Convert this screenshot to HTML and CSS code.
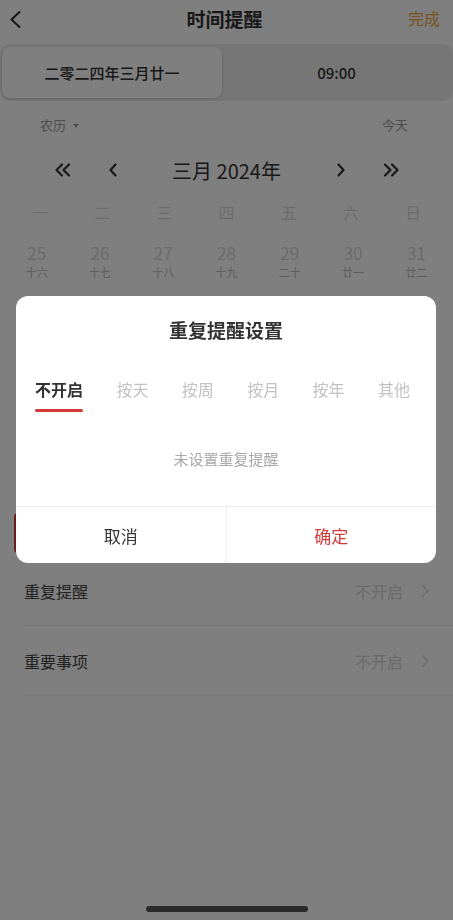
FILE: index.html
```html
<!DOCTYPE html>
<html lang="zh-CN">
<head>
<meta charset="UTF-8">
<meta name="viewport" content="width=device-width, initial-scale=1.0">
<title>时间提醒</title>
<link rel="stylesheet" href="styles.css">
</head>
<body>
<div class="screen">
  <header class="nav">
    <svg class="back" width="12" height="17" viewBox="0 0 12 17"><path d="M10.5 1 L2.5 8.5 L10.5 16" fill="none" stroke="#333" stroke-width="2" stroke-linecap="round" stroke-linejoin="round"/></svg>
    <h1>时间提醒</h1>
    <span class="done">完成</span>
  </header>

  <div class="segment">
    <div class="seg on">二零二四年三月廿一</div>
    <div class="seg">09:00</div>
  </div>

  <div class="cal-tools">
    <span>农历<i class="caret"></i></span>
    <span>今天</span>
  </div>

  <div class="month-nav">
    <span class="arrow outer-l"><svg width="18" height="14" viewBox="0 0 18 14"><path d="M8 1.5 L2.5 7 L8 12.5 M15 1.5 L9.5 7 L15 12.5" fill="none" stroke="#333" stroke-width="2.2" stroke-linecap="round" stroke-linejoin="round"/></svg></span>
    <span class="arrow"><svg width="10" height="14" viewBox="0 0 10 14"><path d="M7.5 1.5 L2.5 7 L7.5 12.5" fill="none" stroke="#333" stroke-width="2.2" stroke-linecap="round" stroke-linejoin="round"/></svg></span>
    <span class="month-title">三月 2024年</span>
    <span class="arrow"><svg width="10" height="14" viewBox="0 0 10 14"><path d="M2.5 1.5 L7.5 7 L2.5 12.5" fill="none" stroke="#333" stroke-width="2.2" stroke-linecap="round" stroke-linejoin="round"/></svg></span>
    <span class="arrow outer-r"><svg width="18" height="14" viewBox="0 0 18 14"><path d="M3 1.5 L8.5 7 L3 12.5 M10 1.5 L15.5 7 L10 12.5" fill="none" stroke="#333" stroke-width="2.2" stroke-linecap="round" stroke-linejoin="round"/></svg></span>
  </div>

  <div class="week">
    <span>一</span><span>二</span><span>三</span><span>四</span><span>五</span><span>六</span><span>日</span>
  </div>

  <!-- rows 2-6 sit under the dialog; only the picked day shows at its edge -->
  <div class="days">
    <div class="day muted"><b>25</b><small>十六</small></div>
    <div class="day muted"><b>26</b><small>十七</small></div>
    <div class="day muted"><b>27</b><small>十八</small></div>
    <div class="day muted"><b>28</b><small>十九</small></div>
    <div class="day muted"><b>29</b><small>二十</small></div>
    <div class="day muted"><b>30</b><small>廿一</small></div>
    <div class="day muted"><b>31</b><small>廿二</small></div>
    <div class="day sel"><b>29</b><small>廿一</small></div>
  </div>

  <div class="settings">
    <div class="row">
      <span>重复提醒</span>
      <span class="val">不开启<svg width="9" height="14" viewBox="0 0 9 14"><path d="M1.5 1.5 L7 7 L1.5 12.5" fill="none" stroke="currentColor" stroke-width="1.4" stroke-linecap="round" stroke-linejoin="round"/></svg></span>
    </div>
    <div class="row">
      <span>重要事项</span>
      <span class="val">不开启<svg width="9" height="14" viewBox="0 0 9 14"><path d="M1.5 1.5 L7 7 L1.5 12.5" fill="none" stroke="currentColor" stroke-width="1.4" stroke-linecap="round" stroke-linejoin="round"/></svg></span>
    </div>
  </div>

  <div class="home-bar"></div>
</div>

<!-- Repeat reminder dialog -->
<div class="mask"></div>
<div class="dialog">
  <h2>重复提醒设置</h2>
  <div class="tabs">
    <span class="tab on">不开启</span>
    <span class="tab">按天</span>
    <span class="tab">按周</span>
    <span class="tab">按月</span>
    <span class="tab">按年</span>
    <span class="tab">其他</span>
  </div>
  <p class="empty">未设置重复提醒</p>
  <div class="dialog-foot">
    <button>取消</button>
    <button class="ok">确定</button>
  </div>
</div>
</body>
</html>
```

FILE: styles.css
```css
* {
  box-sizing: border-box;
}
body {
  margin: 0;
  font-family: "Noto Sans CJK SC", "Noto Sans", sans-serif;
  color: #333;
  background: #fff;
}
.screen {
  width: 453px;
  min-height: 920px;
  display: flex;
  flex-direction: column;
}

/* Top bar */
.nav {
  height: 36px;
  display: grid;
  grid-template-columns: 1fr auto 1fr;
  align-items: center;
  padding: 0 13px 0 9px;
}
.nav .back {
  margin-top: 2px;
}
.nav h1 {
  margin: 0;
  font-size: 19px;
  font-weight: 700;
  color: #333;
}
.nav .done {
  justify-self: end;
  font-size: 16px;
  color: #f0a845;
}

/* Date / time switch */
.segment {
  margin-top: 8px;
  height: 57px;
  padding: 3px 2px;
  background: #ececec;
  border-radius: 10px;
  display: flex;
}
.seg {
  flex: 1;
  display: flex;
  align-items: center;
  justify-content: center;
  font-size: 15px;
  font-weight: 500;
  color: #333;
}
.seg.on {
  flex: 0 0 220px;
  background: #fff;
  border-radius: 8px;
  box-shadow: 0 1px 3px rgba(0,0,0,0.14);
}

/* Calendar */
.cal-tools {
  margin-top: 9px;
  height: 28px;
  display: flex;
  justify-content: space-between;
  align-items: center;
  padding: 0 45px 0 40px;
  font-size: 13px;
  color: #9a9a9a;
}
.caret {
  display: inline-block;
  border: 3.5px solid transparent;
  border-top: 4px solid #9a9a9a;
  border-bottom: 0;
  margin-left: 7px;
  vertical-align: middle;
}
.month-nav {
  margin-top: 12px;
  height: 40px;
  display: flex;
  justify-content: center;
  align-items: center;
}
.arrow {
  width: 30px;
  display: flex;
  justify-content: center;
}
.arrow svg {
  display: block;
}
.outer-l {
  margin-right: 20px;
}
.outer-r {
  margin-left: 20px;
}
.month-title {
  width: 198px;
  text-align: center;
  font-size: 20px;
  color: #333;
}
.week {
  margin-top: 7px;
  height: 30px;
  display: grid;
  grid-template-columns: repeat(7, 1fr);
  align-items: center;
  padding: 0 9px;
  text-align: center;
  font-size: 16px;
  color: #d9d9d9;
}
.days {
  margin-top: 16px;
  display: grid;
  grid-template-columns: repeat(7, 1fr);
  grid-auto-rows: 40px;
  row-gap: 14px;
  padding: 0 5px;
}
.day {
  margin: 0 9px;
  border-radius: 4px;
  display: flex;
  flex-direction: column;
  align-items: center;
  color: #333;
}
.day b {
  font-weight: 400;
  font-size: 17px;
  line-height: 20px;
}
.day small {
  font-size: 11px;
  line-height: 15px;
  margin-top: 2px;
  color: #777;
}
.day.muted b {
  color: #d6d6d6;
}
.day.muted small {
  color: #b8b8b8;
}
.day.sel {
  grid-row: 6;
  grid-column: 1;
  background: #d33b3b;
}
.day.sel b,
.day.sel small {
  color: #fff;
}

/* Settings list */
.settings {
  margin-top: 3px;
  padding-left: 24px;
}
.row {
  height: 70px;
  display: flex;
  align-items: center;
  justify-content: space-between;
  padding-right: 23px;
  border-bottom: 1px solid #f0f0f0;
  font-size: 16px;
  color: #444;
}
.row .val {
  display: flex;
  align-items: center;
  gap: 18px;
  color: #d4d4d4;
}
.home-bar {
  margin: auto auto 8px;
  width: 162px;
  height: 6px;
  border-radius: 3px;
  background: #555;
}

/* Dialog */
.mask {
  position: fixed;
  left: 0; top: 0;
  width: 100%; height: 100%;
  background: rgba(0,0,0,0.5);
}
.dialog {
  position: fixed;
  top: 296px;
  left: 16px;
  width: 420px;
  background: #fff;
  border-radius: 12px;
  overflow: hidden;
}
.dialog h2 {
  margin: 0;
  padding-top: 20px;
  line-height: 28px;
  text-align: center;
  font-size: 19px;
  font-weight: 700;
  color: #333;
}
.tabs {
  margin-top: 33px;
  display: flex;
  align-items: flex-start;
  justify-content: space-between;
  padding: 0 26px 0 19px;
}
.tab {
  font-size: 16px;
  line-height: 24px;
  color: #c2c2c2;
}
.tab.on {
  color: #333;
  font-weight: 700;
}
.tab.on::after {
  content: "";
  display: block;
  height: 3px;
  margin-top: 8px;
  border-radius: 2px;
  background: #d33b3b;
}
.empty {
  margin: 36px 0 0;
  line-height: 22px;
  text-align: center;
  font-size: 15px;
  color: #a8a8a8;
}
.dialog-foot {
  margin-top: 36px;
  height: 57px;
  display: flex;
  border-top: 1px solid #efefef;
}
.dialog-foot button {
  flex: 1;
  border: none;
  background: none;
  font-family: inherit;
  font-size: 17px;
  color: #333;
}
.dialog-foot button + button {
  border-left: 1px solid #efefef;
}
.dialog-foot .ok {
  color: #d33b3b;
}
```
